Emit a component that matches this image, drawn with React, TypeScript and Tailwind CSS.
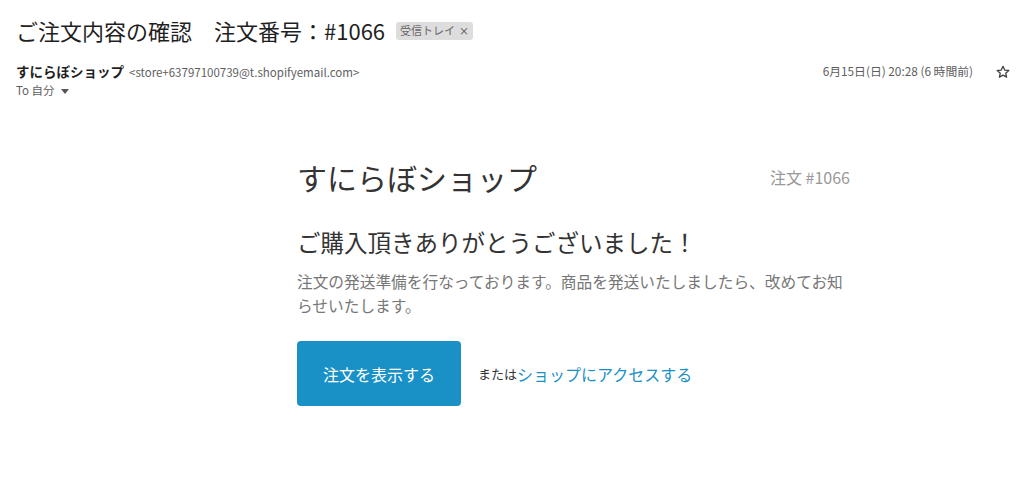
import React from 'react';

const font = { fontFamily: '"Noto Sans CJK JP", Roboto, "Liberation Sans", sans-serif' };

const App = () => {
    return (
        <div className="w-[1024px] h-[489px] bg-white text-[#222] overflow-hidden" style={font}>
            {/* Subject */}
            <div className="flex items-center pl-4 pt-[13px] h-[46px]">
                <h1 className="text-[22px] leading-[30px] text-[#1f1f1f] font-normal">ご注文内容の確認　注文番号：#1066</h1>
                <span className="ml-[11px] mt-[2px] flex items-center h-[18px] px-[4px] bg-[#dddddd] rounded-[3px] text-[11px] text-[#666]">
                    受信トレイ
                    <span className="ml-[4px] text-[10px] text-[#444]">×</span>
                </span>
            </div>

            {/* Sender */}
            <div className="flex items-start pl-4 pr-[13px] mt-[15px]">
                <div className="flex-1">
                    <div className="flex items-baseline h-[20px]">
                        <span className="text-[13.5px] font-bold text-[#1f1f1f]">すにらぼショップ</span>
                        <span className="ml-[5px] text-[11.5px] text-[#5e5e5e]">&lt;store+63797100739@t.shopifyemail.com&gt;</span>
                    </div>
                    <div className="flex items-center text-[11.5px] text-[#5e5e5e] h-[18px] mt-[1px]">
                        To 自分
                        <svg width="8" height="5" viewBox="0 0 8 5" className="ml-[6px]">
                            <path d="M0 0 L8 0 L4 5 Z" fill="#555" />
                        </svg>
                    </div>
                </div>
                <div className="flex items-center h-[20px]">
                    <span className="text-[11.8px] text-[#5e5e5e]">6月15日(日) 20:28 (6 時間前)</span>
                    <svg width="16" height="16" viewBox="0 0 24 24" className="ml-[22px] mt-[2px]">
                        <path
                            d="M12 3.5l2.6 5.6 6.1.6-4.6 4.1 1.3 6-5.4-3.1-5.4 3.1 1.3-6-4.6-4.1 6.1-.6z"
                            fill="none"
                            stroke="#444"
                            strokeWidth="2"
                            strokeLinejoin="round"
                        />
                    </svg>
                </div>
            </div>

            {/* Email body */}
            <div className="ml-[297px] w-[553px] mt-[57px]">
                <div className="flex items-center justify-between">
                    <span className="text-[30px] leading-[40px] text-[#333]">すにらぼショップ</span>
                    <span className="text-[16px] text-[#999]">注文 #1066</span>
                </div>

                <h2 className="mt-[29px] text-[23.5px] leading-[32px] text-[#333] font-normal">ご購入頂きありがとうございました！</h2>
                <p className="mt-[12px] text-[15.7px] leading-[24px] text-[#777]">
                    注文の発送準備を行なっております。商品を発送いたしましたら、改めてお知らせいたします。
                </p>

                <div className="flex items-center mt-[23px]">
                    <button className="w-[164px] h-[65px] bg-[#1990c6] rounded-[4px] text-white text-[16px]">注文を表示する</button>
                    <span className="ml-[17px] text-[13px] text-[#333]">または</span>
                    <a className="text-[16px] text-[#1990c6]">ショップにアクセスする</a>
                </div>
            </div>
        </div>
    );
};

export default App;
